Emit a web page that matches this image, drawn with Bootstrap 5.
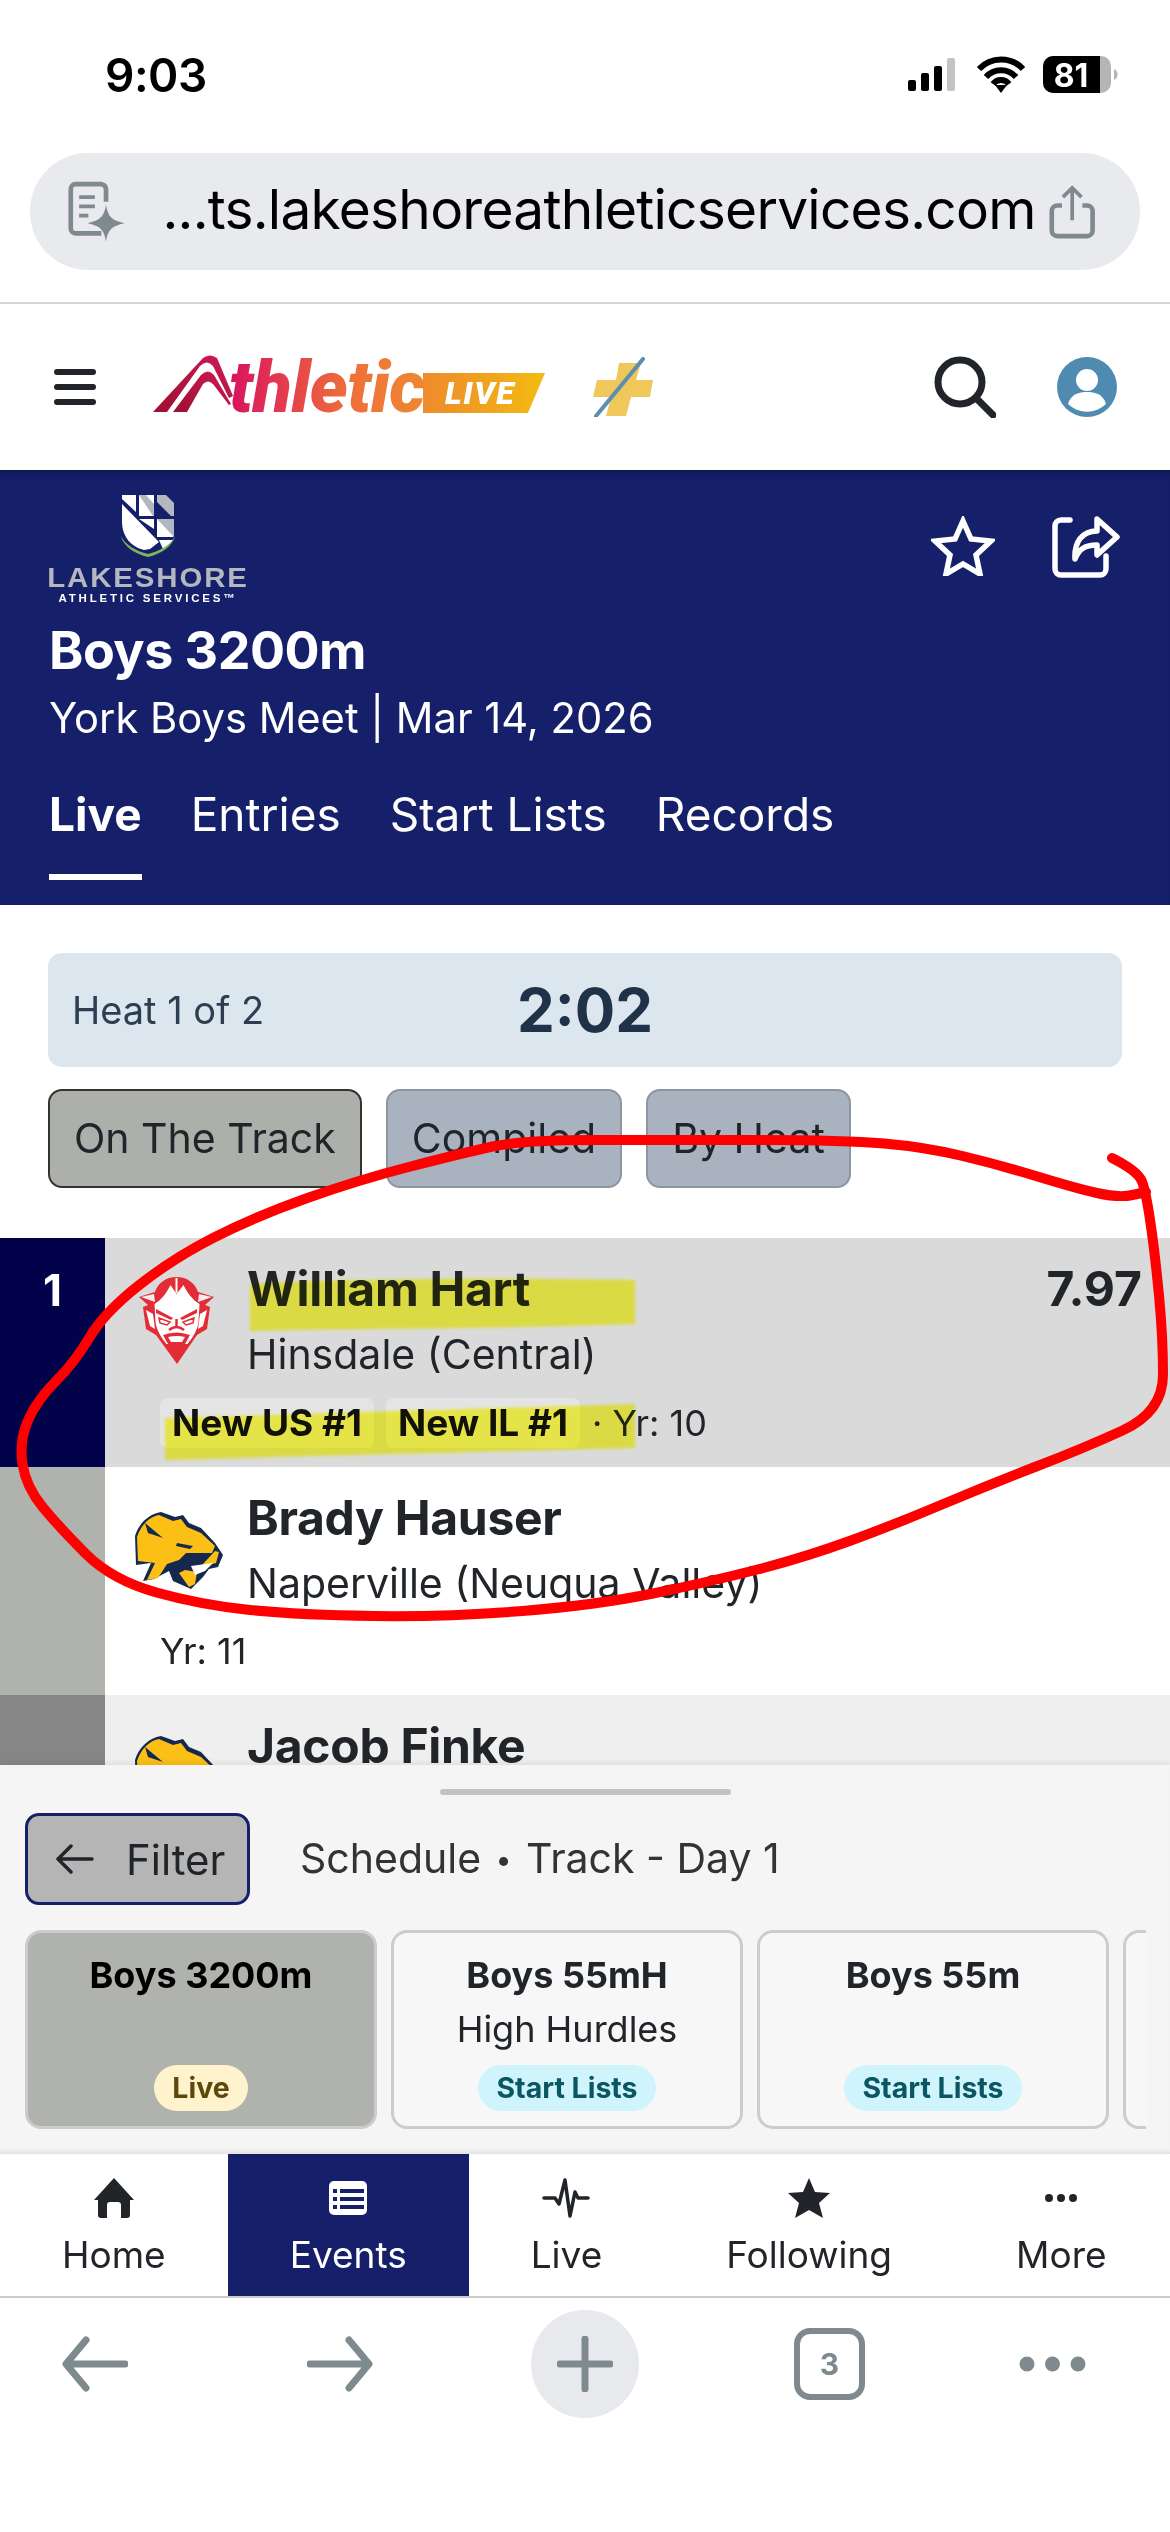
<!DOCTYPE html>
<html lang="en">
<head>
<meta charset="utf-8">
<title>Boys 3200m - Athletic Live</title>
<meta name="viewport" content="width=device-width,initial-scale=1">
<link href="https://cdn.jsdelivr.net/npm/bootstrap@5.3.0/dist/css/bootstrap.min.css" rel="stylesheet">
<style>
  body          { width:1170px; height:2532px; overflow:hidden; position:relative; font-family:Inter,"Liberation Sans",sans-serif; color:#212529; background:#fff; }
  /* phone chrome */
  .status-bar   { height:153px; padding:55px 52px 0 105px; }
  .status-time  { font-size:46px; line-height:40px; font-weight:600; color:#000; letter-spacing:-.5px; }
  .url-wrap     { height:151px; padding:0 30px; border-bottom:2px solid #d4d4d4; }
  .url-bar      { height:117px; background:#e8eaed; border-radius:58px; padding:0 45px 0 38px; }
  .url-text     { font-size:55px; line-height:60px; color:#000; margin-left:37px; margin-right:13px; margin-bottom:6px; letter-spacing:-.75px; white-space:nowrap; flex:1; }
  /* app header */
  .app-head     { height:166px; padding:0 53px 0 54px; }
  .brand-word   { font:italic 900 72px/66px Roboto,sans-serif; letter-spacing:-.6px; background:linear-gradient(90deg,#d9125f,#ee6f3a 60%,#ee8a30); -webkit-background-clip:text; background-clip:text; color:transparent; padding-right:4px; margin-left:-6px; margin-top:2px; }
  .brand-live   { font:italic 900 32px/40px Roboto,sans-serif; letter-spacing:1.5px; color:#fff; width:122px; height:40px; margin-top:20px; margin-left:-6px; padding-left:22px; background:linear-gradient(90deg,#ee8a2c,#f2bb12); clip-path:polygon(0 0,100% 0,86% 100%,0 100%); }
  .meet-head    { height:435px; background:#16206a; color:#fff; box-shadow:inset 0 6px 6px -4px #0d1447; position:relative; padding:0 49px; }
  .lake-logo    { width:200px; margin-left:-1px; padding-top:24px; margin-bottom:16px; text-align:center; }
  .lake-name    { font:700 28px/24px "Liberation Sans",sans-serif; color:#b3b8bf; letter-spacing:1.8px; transform:scaleX(1.05); white-space:nowrap; }
  .lake-sub     { font:700 11.500px/14px "Liberation Sans",sans-serif; letter-spacing:2.8px; white-space:nowrap; margin-top:1px; }
  .meet-title   { font-size:52px; line-height:60px; font-weight:700; letter-spacing:-.5px; margin:0; }
  .meet-sub     { font-size:41.700px; line-height:50px; margin-top:12px; }
  .meet-tabs    { gap:49px; margin-top:43px; font-size:46px; line-height:56px; }
  .meet-tab     { color:#fff; text-decoration:none; padding-bottom:32px; border-bottom:6px solid transparent; }
  .meet-tab.on  { font-weight:700; border-bottom-color:#fff; }
  .meet-icons   { position:absolute; top:46px; right:50px; gap:57px; }
  /* heat box + view buttons */
  .heat-area    { padding:48px 48px 0; height:333px; }
  .heat-box     { height:114px; background:#dce6ef; border-radius:14px; padding:0 24px; position:relative; font-size:38px; color:#2c3e50; }
  .heat-clock   { position:absolute; left:0; right:0; text-align:center; font-size:60px; font-weight:700; color:#1f3247; }
  .view-btn     { height:99px; font-size:41px; color:#212529; border-radius:14px; padding:0 24px; background:#a9b3bf; border:2px solid #8c96a3; }
  .view-btn.on  { background:#adafab; border-color:#333; }
  .view-row     { gap:24px; margin-top:22px; }
  /* results list */
  .result-list  { height:527px; overflow:hidden; }
  .result-row   { height:228.5px; flex:none; }
  .rank-cell    { width:105px; flex:none; color:#fff; font-size:44px; font-weight:700; text-align:center; padding-top:27px; line-height:50px; }
  .result-body  { padding:24px 28px 0 0; }
  .team-logo    { width:142px; flex:none; }
  .team-logo.cat{ padding-left:5px; }
  .ath-name     { font-size:48px; line-height:54px; font-weight:700; letter-spacing:-.3px; }
  .ath-school   { font-size:41px; line-height:48px; margin-top:14px; }
  .ath-mark     { font-size:48px; line-height:54px; font-weight:700; padding-left:3px; }
  .ath-meta     { padding-left:55px; font-size:36px; line-height:48px; margin-top:20px; gap:12px; }
  .rec-chip     { background:#e4e4e4; border-radius:8px; padding:0 12px; font-weight:700; font-size:37px; line-height:50px; color:#111; }
  /* bottom sheet */
  .sheet        { height:389px; background:#f5f5f5; position:relative; box-shadow:0 -2px 6px rgba(0,0,0,.08), inset 0 -6px 6px -5px rgba(0,0,0,.12); padding-top:24px; }
  .sheet-handle { width:291px; height:6px; background:#c2c2c2; border-radius:3px; margin:0 auto; }
  .filter-row   { padding:18px 25px 0; gap:50px; }
  .filter-btn   { width:225px; height:92px; background:#b5b5b5; border:3px solid #16206a; border-radius:14px; color:#212529; font-size:42px; gap:32px; padding:0 12px 0 28px; }
  .filter-txt   { font-size:41px; color:#333; }
  .dot-sep      { font-size:.7em; vertical-align:.1em; padding:0 .1em; }
  .event-scroll { margin:25px 24px 0 25px; gap:14px; overflow:hidden; }
  .event-card   { width:352px; height:199px; flex:none; border:3px solid #ccc; border-radius:16px; text-align:center; padding-top:21px; background:#f7f7f7; }
  .event-card.on{ background:#b0b2ae; color:#000; }
  .event-name   { font-size:36px; line-height:42px; font-weight:700; }
  .event-note   { font-size:36px; line-height:42px; margin-top:12px; height:42px; }
  .event-pill   { font-size:28.500px; line-height:46px; font-weight:700; padding:0 18px; margin-top:15px; }
  .pill-live    { background:#fff3cd; color:#5c4a0a; }
  .pill-start   { background:#cff4fc; color:#0a5663; }
  /* bottom nav */
  .app-nav      { height:144px; background:#fff; border-bottom:2px solid #ccc; }
  .nav-cell     { padding:24px 62px 0; font-size:37px; line-height:46px; color:#212529; text-decoration:none; text-align:center; }
  .nav-cell svg { display:block; margin:0 auto 14px; }
  .nav-cell.on  { background:#16206a; color:#fff; }
  .tool-bar     { height:120px; position:relative; }
  .plus-circle  { width:108px; height:108px; border-radius:50%; background:#e8e9ed; margin-left:158px; }
  .tool-row     { padding:12px 0 0 62px; }
  .tool-next    { margin-left:179px; }
  .tab-count    { width:71px; height:72px; border:6px solid #7f8a8f; border-radius:16px; color:#7f8a8f; font-size:30px; font-weight:700; margin-left:155px; }
  .tool-more    { margin-left:154px; }
  /* pen marks on top of the screenshot */
  .ink-layer    { position:absolute; left:0; top:0; pointer-events:none; }
  .ink-yellow   { mix-blend-mode:multiply; filter:blur(1.5px); }
</style>
</head>
<body>

<!-- ───── status bar ───── -->
<div class="status-bar d-flex justify-content-between">
  <div class="status-time">9:03</div>
  <svg width="210" height="40" viewBox="-5 0 210 40">
    <g fill="#000"><rect x="-5" y="25" width="8" height="11" rx="2"/><rect x="8" y="18" width="8" height="18" rx="2"/><rect x="21" y="11" width="8" height="25" rx="2"/></g>
    <rect x="34" y="3" width="8" height="33" rx="2" fill="#c4c4c4"/>
    <path d="M66 14a30 30 0 0 1 44 0M73 22a20 20 0 0 1 30 0M80 29a10 10 0 0 1 16 0" fill="none" stroke="#000" stroke-width="6"/>
    <path d="M88 38l-6-8h12z" fill="#000"/>
    <rect x="130" y="1" width="68" height="37" rx="10" fill="#b5b5b5"/>
    <path d="M140 1h47v37h-47a10 10 0 0 1-10-10v-17a10 10 0 0 1 10-10z" fill="#000"/>
    <path d="M201 14a6 6 0 0 1 0 11z" fill="#b5b5b5"/>
    <text x="158" y="32" text-anchor="middle" fill="#fff" font-family="Inter,sans-serif" font-weight="700" font-size="32">81</text>
  </svg>
</div>

<!-- ───── url bar ───── -->
<div class="url-wrap">
  <div class="url-bar d-flex align-items-center">
    <svg width="62" height="66" viewBox="0 0 62 66" fill="none" stroke="#7f8a8f" stroke-width="5">
      <path d="M36 56H8a5 5 0 0 1-5-5V8a5 5 0 0 1 5-5h28a6 6 0 0 1 5 5v14"/>
      <path d="M12 17h17M12 27h17M12 37h10" stroke-width="4"/>
      <path d="M41 25c2 13 6 17 20 20-14 3-18 7-20 20-2-13-6-17-20-20 14-3 18-7 20-20z" fill="#7f8a8f" stroke="none"/>
    </svg>
    <div class="url-text">...ts.lakeshoreathleticservices.com</div>
    <svg width="50" height="58" viewBox="0 0 50 58" fill="none" stroke="#7f8a8f" stroke-width="5">
      <path d="M14 22H9a6 6 0 0 0-6 6v21a6 6 0 0 0 6 6h32a6 6 0 0 0 6-6V28a6 6 0 0 0-6-6h-5"/>
      <path d="M25 38V4M15 13l10-10 10 10" stroke-width="4"/>
    </svg>
  </div>
</div>

<!-- ───── app header ───── -->
<div class="app-head d-flex align-items-center">
  <svg width="42" height="36" viewBox="0 0 42 36" fill="#212529"><rect y="0" width="42" height="6" rx="3"/><rect y="15" width="42" height="6" rx="3"/><rect y="30" width="42" height="6" rx="3"/></svg>
  <div class="d-flex align-items-start" style="margin-left:57px">
    <svg width="82" height="62" viewBox="0 0 82 60">
      <defs><linearGradient id="aGrad" x1="0" y1="1" x2="1" y2="0"><stop offset="0" stop-color="#9c0f32"/><stop offset="1" stop-color="#cf1a55"/></linearGradient></defs>
      <path d="M0 58L50 4q7-5 14 0L80 42 76 44 60 12q-6-7-13 0L14 58z" fill="url(#aGrad)"/>
      <path d="M20 58L48 21q7-7 13 0L78 50l-2 1L60 30q-5-5-10 0L34 58z" fill="url(#aGrad)"/>
    </svg>
    <div class="brand-word">thletic</div>
    <div class="brand-live">LIVE</div>
  </div>
  <svg width="60" height="60" viewBox="0 0 60 60" style="margin-left:48px">
    <path d="M26 6h22l-5 17h17l-3 17H38l-5 19H13l5-19H0l4-17h19z" fill="#f0c75a"/>
    <path d="M3 59L50 2" stroke="#5b8fae" stroke-width="4" stroke-linecap="round"/>
  </svg>
  <svg class="ms-auto" width="62" height="62" viewBox="0 0 62 62" fill="none" stroke="#212529" stroke-width="7" stroke-linecap="round"><circle cx="26" cy="26" r="22"/><path d="M42 42l17 17"/></svg>
  <svg width="60" height="60" viewBox="0 0 60 60" style="margin-left:61px"><circle cx="30" cy="30" r="30" fill="#4f8ab0"/><circle cx="30" cy="23" r="11" fill="#fff"/><path d="M11 47c3-10 11-12 19-12s16 2 19 12a27 27 0 0 1-38 0z" fill="#fff"/></svg>
</div>

<!-- ───── meet header ───── -->
<div class="meet-head">
  <div class="lake-logo">
    <svg width="54" height="64" viewBox="0 0 54 64" class="d-block mx-auto" style="margin-bottom:8px">
      <path d="M1 1h14v17L1 5z" fill="#fff"/>
      <path d="M1 10l37 38-9 7-6 1C10 53 1 42 1 28z" fill="#fff"/>
      <path d="M18 1h15v21H18z" fill="#fff"/><path d="M18 1h7l8 9v12h-1z" fill="#b3b8bf"/>
      <path d="M36 1h17v21h-3L36 8z" fill="#b3b8bf"/><path d="M45 1h8v8z" fill="#16206a"/>
      <path d="M18 25h15v10z" fill="#fff"/>
      <path d="M36 25h17v16l-1 2H36z" fill="#fff"/><path d="M36 25h17v18z" fill="#b3b8bf"/>
      <path d="M38 46h14l-5 6-5 3z" fill="#fff"/>
      <path d="M0 42c2 10 14 18 27 21 13-3 25-11 27-21-4 9-15 15-27 18C15 57 4 51 0 42z" fill="#7cb856"/>
    </svg>
    <div class="lake-name">LAKESHORE</div>
    <div class="lake-sub">ATHLETIC SERVICES™</div>
  </div>
  <h1 class="meet-title">Boys 3200m</h1>
  <div class="meet-sub">York Boys Meet | Mar 14, 2026</div>
  <div class="meet-tabs d-flex">
    <a class="meet-tab on" href="#">Live</a>
    <a class="meet-tab" href="#">Entries</a>
    <a class="meet-tab" href="#">Start Lists</a>
    <a class="meet-tab" href="#">Records</a>
  </div>
  <div class="meet-icons d-flex">
    <svg width="64" height="60" viewBox="0 0 64 60" fill="none" stroke="#fff" stroke-width="5.5"><path d="M32 5l8 18 20 2-15 14 4 19-17-10-17 10 4-19L4 25l20-2z"/></svg>
    <svg width="68" height="62" viewBox="0 0 68 62" fill="none" stroke="#fff" stroke-width="5.5" stroke-linejoin="round" stroke-linecap="round"><path d="M18 4H9a6 6 0 0 0-6 6v43a6 6 0 0 0 6 6h39a6 6 0 0 0 6-6V40"/><path d="M45 3l20 18-20 18V29c-12 0-18 4-22 14-1-17 7-28 22-28z"/></svg>
  </div>
</div>

<!-- ───── heat + view buttons ───── -->
<div class="heat-area">
  <div class="heat-box d-flex align-items-center">
    <span>Heat 1 of 2</span>
    <span class="heat-clock">2:02</span>
  </div>
  <div class="view-row d-flex">
    <button class="btn view-btn on">On The Track</button>
    <button class="btn view-btn">Compiled</button>
    <button class="btn view-btn">By Heat</button>
  </div>
</div>

<!-- ───── results ───── -->
<div class="result-list">
  <div class="result-row d-flex" style="background:#dadada">
    <div class="rank-cell" style="background:#02024a">1</div>
    <div class="result-body flex-grow-1">
      <div class="d-flex">
        <div class="team-logo d-flex justify-content-center">
          <svg width="75" height="87" viewBox="0 0 75 87" style="margin-top:15px">
            <path d="M37.500 0C48 0 56 6 59 15L75 20 66 28 71 30 68 52 58 58 38 87 17 58 7 52 4 30 9 28 0 20 16 15C19 6 27 0 37.500 0z" fill="#e32c35"/>
            <path d="M36.500 1h2v15h-2z" fill="#fff"/>
            <path d="M2 20l13-3 1 8zM73 20l-13-3-1 8z" fill="#f4eeee"/>
            <path d="M37.500 17l-6-9c-4 8-9 15-16 19l1 18c1 9 7 17 11 22h21c4-5 10-13 11-22l1-18c-7-4-12-11-16-19z" fill="#fff"/>
            <path d="M7 33l7 4 2 15-5-3zM68 33l-7 4-2 15 5-3z" fill="#fff"/>
            <path d="M17 32l17 9-2 2-15-7zM58 32l-17 9 2 2 15-7z" fill="#e32c35"/>
            <path d="M20 41l11 4-3 3-7-2zM55 41l-11 4 3 3 7-2z" fill="none" stroke="#e32c35" stroke-width="1.500"/>
            <path d="M37.500 42v8M30 53q7.500-6 15 0" fill="none" stroke="#e32c35" stroke-width="2.500"/>
            <path d="M24 58q13.500-5 27 0l-5 9H29z" fill="#e32c35"/>
            <path d="M29 60q8.500-2 17 0l-3 5H32z" fill="#fff"/>
          </svg>
        </div>
        <div class="flex-grow-1">
          <div class="ath-name">William Hart</div>
          <div class="ath-school">Hinsdale (Central)</div>
        </div>
        <div class="ath-mark">7.97</div>
      </div>
      <div class="ath-meta d-flex align-items-center">
        <span class="rec-chip">New US #1</span>
        <span class="rec-chip">New IL #1</span>
        <span>· Yr: 10</span>
      </div>
    </div>
  </div>

  <div class="result-row d-flex" style="background:#fff">
    <div class="rank-cell" style="background:#b0b2ae"></div>
    <div class="result-body flex-grow-1">
      <div class="d-flex">
        <div class="team-logo cat d-flex justify-content-center">
          <svg width="88" height="78" viewBox="0 0 88 78" style="margin-top:20px"><use href="#lion"/></svg>
        </div>
        <div class="flex-grow-1">
          <div class="ath-name">Brady Hauser</div>
          <div class="ath-school">Naperville (Neuqua Valley)</div>
        </div>
      </div>
      <div class="ath-meta d-flex align-items-center"><span>Yr: 11</span></div>
    </div>
  </div>

  <div class="result-row d-flex" style="background:#efefef">
    <div class="rank-cell" style="background:#868686"></div>
    <div class="result-body flex-grow-1">
      <div class="d-flex">
        <div class="team-logo cat d-flex justify-content-center">
          <svg width="88" height="78" viewBox="0 0 88 78" style="margin-top:16px"><use href="#lion"/></svg>
        </div>
        <div class="ath-name">Jacob Finke</div>
      </div>
    </div>
  </div>
</div>

<!-- ───── bottom sheet ───── -->
<div class="sheet">
  <div class="sheet-handle"></div>
  <div class="filter-row d-flex align-items-center">
    <button class="btn filter-btn d-flex align-items-center">
      <svg width="38" height="32" viewBox="0 0 38 32" fill="none" stroke="#212529" stroke-width="3.5" stroke-linecap="round" stroke-linejoin="round"><path d="M36 16H3M15 3L2 16l13 13"/></svg>
      <span>Filter</span>
    </button>
    <div class="filter-txt">Schedule <span class="dot-sep">•</span> Track - Day 1</div>
  </div>
  <div class="event-scroll d-flex">
    <div class="event-card on">
      <div class="event-name">Boys 3200m</div>
      <div class="event-note"></div>
      <span class="badge rounded-pill event-pill pill-live">Live</span>
    </div>
    <div class="event-card">
      <div class="event-name">Boys 55mH</div>
      <div class="event-note">High Hurdles</div>
      <span class="badge rounded-pill event-pill pill-start">Start Lists</span>
    </div>
    <div class="event-card">
      <div class="event-name">Boys 55m</div>
      <div class="event-note"></div>
      <span class="badge rounded-pill event-pill pill-start">Start Lists</span>
    </div>
    <div class="event-card"></div>
  </div>
</div>

<!-- ───── app nav ───── -->
<div class="app-nav d-flex">
  <a class="nav-cell" href="#">
    <svg width="44" height="40" viewBox="0 0 44 40" fill="#212529"><path d="M22 0l20 22h-4v15a3 3 0 0 1-3 3h-6V27a3 3 0 0 0-3-3h-8a3 3 0 0 0-3 3v13H9a3 3 0 0 1-3-3V22H2z"/></svg>
    Home
  </a>
  <a class="nav-cell on" href="#">
    <svg width="38" height="40" viewBox="0 0 38 40"><rect width="38" height="34" y="3" rx="5" fill="#fff"/><g fill="#16206a"><rect x="4" y="11" width="4" height="4"/><rect x="11" y="11" width="24" height="4"/><rect x="4" y="19" width="4" height="4"/><rect x="11" y="19" width="24" height="4"/><rect x="4" y="27" width="4" height="4"/><rect x="11" y="27" width="24" height="4"/></g></svg>
    Events
  </a>
  <a class="nav-cell" href="#">
    <svg width="48" height="40" viewBox="0 0 48 40" fill="none" stroke="#212529" stroke-width="3.5" stroke-linejoin="round" stroke-linecap="round"><path d="M2 20h11l4 6 6-24 5 36 5-24 3 6h10"/></svg>
    Live
  </a>
  <a class="nav-cell" href="#">
    <svg width="42" height="40" viewBox="0 0 42 40" fill="#212529"><path d="M21 0l6 14 15 1-11 10 4 15-14-8-14 8 4-15L0 15l15-1z"/></svg>
    Following
  </a>
  <a class="nav-cell" href="#">
    <svg width="34" height="40" viewBox="0 0 34 40" fill="#212529"><circle cx="5" cy="20" r="4"/><circle cx="17" cy="20" r="4"/><circle cx="29" cy="20" r="4"/></svg>
    More
  </a>
</div>

<!-- ───── browser toolbar ───── -->
<div class="tool-bar">
  <div class="tool-row d-flex align-items-center">
    <svg width="66" height="56" viewBox="0 0 66 56" fill="none" stroke="#7f8a8f" stroke-width="7" stroke-linecap="round" stroke-linejoin="round"><path d="M63 28H5M24 4L4 28l20 24"/></svg>
    <svg class="tool-next" width="66" height="56" viewBox="0 0 66 56" fill="none" stroke="#7f8a8f" stroke-width="7" stroke-linecap="round" stroke-linejoin="round"><path d="M3 28h58M42 4l20 24-20 24"/></svg>
    <div class="plus-circle d-flex align-items-center justify-content-center">
      <svg width="56" height="56" viewBox="0 0 56 56" stroke="#7f8a8f" stroke-width="7" stroke-linecap="round"><path d="M28 3v50M3 28h50"/></svg>
    </div>
    <div class="tab-count d-flex align-items-center justify-content-center">3</div>
    <svg class="tool-more" width="67" height="16" viewBox="0 0 67 16" fill="#7f8a8f"><circle cx="8" cy="8" r="7.5"/><circle cx="33.500" cy="8" r="7.5"/><circle cx="59" cy="8" r="7.5"/></svg>
  </div>
</div>

<!-- shared lion mark -->
<svg width="0" height="0" class="position-absolute">
  <symbol id="lion" viewBox="0 0 88 78">
    <path d="M26 1l14 5 8-2 6 8 12 5 14 15 8 12-5 12-9 2-6 8-12 12-18-8-4-10L19 68 8 70l8-18L1 54 0 25C4 12 14 3 26 1z" fill="#15294f"/>
    <path d="M24 4l14 6 8-2 6 8 14 6 14 13-3 7-26 0-7 7-12 4-9 14-11 2 8-17L3 50 2 26C6 14 14 6 24 4z" fill="#fcbf16"/>
    <path d="M10 12l12 10 6 5-15-5zM42 32l16 3-3 3-14-3z" fill="#15294f"/>
    <path d="M80 40l4 1-3 11-8 2-5 4-9 1 9-6z" fill="#fcbf16"/>
    <path d="M44 62l10 14 6-3 2-12-12-2z" fill="#fcbf16"/>
    <path d="M56 55l22-3-8 8-10 4z" fill="#fff"/>
  </symbol>
</svg>

<!-- ───── pen marks ───── -->
<svg class="ink-layer" width="1170" height="2532" viewBox="0 0 1170 2532" fill="none">
  <g class="ink-yellow" fill="#ffff50">
    <path d="M250 1284c100-6 260-6 385-4v44c-130 5-280 4-385 7z"/>
    <path d="M165 1418l470-14v44c-150 4-320 8-470 12z"/>
  </g>
  <path id="redInk" stroke="#f00" stroke-width="10" stroke-linecap="round" stroke-linejoin="round"/>
</svg>

<script src="https://cdn.jsdelivr.net/npm/bootstrap@5.3.0/dist/js/bootstrap.bundle.min.js"></script>
<script>
/* red circle, smoothed through the midpoints */
const pts=[[1112,1158],[1138,1171],[1146,1192],[1155,1254],[1163,1337],[1163,1412],[1082,1449],[993,1483],[896,1524],[806,1557],[709,1582],[597,1605],[448,1617],[299,1615],[201,1605],[112,1580],[60,1528],[26,1487],[19,1441],[37,1400],[75,1362],[104,1313],[172,1259],[254,1217],[358,1180],[463,1153],[522,1140],[672,1140],[843,1140],[925,1147],[1000,1165],[1075,1188],[1119,1198],[1146,1192]];
let d=`M${pts[0][0]} ${pts[0][1]}`;
for(let i=1;i<pts.length-1;i++){
  const mx=(pts[i][0]+pts[i+1][0])/2,my=(pts[i][1]+pts[i+1][1])/2;
  d+=` Q${pts[i][0]} ${pts[i][1]} ${mx} ${my}`;
}
d+=` L${pts[pts.length-1][0]} ${pts[pts.length-1][1]}`;
document.getElementById('redInk').setAttribute('d',d);
</script>
</body>
</html>
